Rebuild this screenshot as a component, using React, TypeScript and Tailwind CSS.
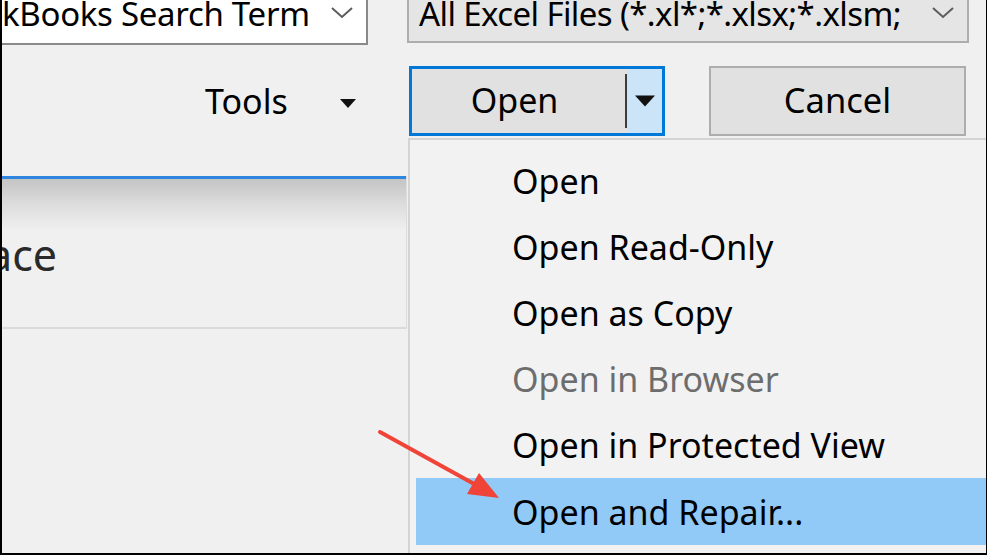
import React from 'react';

const font = "font-['Noto_Sans',sans-serif]";

const menuItems = [
  { label: 'Open' },
  { label: 'Open Read-Only' },
  { label: 'Open as Copy' },
  { label: 'Open in Browser', disabled: true },
  { label: 'Open in Protected View' },
  { label: 'Open and Repair...', active: true },
];

function Chevron() {
  return (
    <svg width="24" height="14" viewBox="0 0 24 14" className="shrink-0">
      <path d="M2 2 L12 11 L22 2" fill="none" stroke="#5c5c5c" strokeWidth="2" />
    </svg>
  );
}

function Caret({ w = 18, h = 10 }: { w?: number; h?: number }) {
  return (
    <svg width={w} height={h} viewBox="0 0 18 10">
      <path d="M0 0 H18 L9 10 Z" fill="#111" />
    </svg>
  );
}

export default function App() {
  return (
    <div
      className={`relative w-[987px] h-[555px] overflow-hidden bg-[#f0f0f0] border-l-2 border-b-2 border-r border-black ${font} text-black`}
    >
      {/* top row: search box + file type filter */}
      <div className="flex items-start">
        <div className="w-[366px] h-[45px] bg-white border-r-2 border-b-2 border-[#8a8a8a] flex items-center overflow-hidden pr-[12px]">
          <span className="ml-0 text-[33px] leading-none whitespace-nowrap tracking-[-0.3px] mt-[-16px]">
            kBooks Search Term
          </span>
          <div className="ml-auto mt-[-18px]">
            <Chevron />
          </div>
        </div>
        <div className="ml-[39px] w-[562px] h-[43px] bg-[#e5e5e5] border-l-2 border-r-2 border-b-2 border-[#adadad] flex items-center overflow-hidden pl-[10px] pr-[12px]">
          <span className="text-[33px] leading-none whitespace-nowrap tracking-[-0.6px] mt-[-14px]">
            All Excel Files (*.xl*;*.xlsx;*.xlsm;
          </span>
          <div className="ml-auto mt-[-16px]">
            <Chevron />
          </div>
        </div>
      </div>

      {/* second row: tools + buttons */}
      <div className="flex items-center mt-[21px] h-[70px]">
        <div className="w-[407px] flex items-center">
          <span className="ml-[203px] text-[34px] leading-none">Tools</span>
          <div className="ml-[52px] mt-[4px]">
            <Caret w={16} h={9} />
          </div>
        </div>
        <div className="w-[256px] h-[70px] border-[3px] border-[#0078d7] flex">
          <div className="flex-1 bg-[#e1e1e1] flex items-center justify-center">
            <span className="text-[34px] leading-none mb-[2px] mr-[8px]">Open</span>
          </div>
          <div className="w-[2px] bg-[#e1e1e1] flex items-center">
            <div className="w-[2px] h-[54px] bg-[#3c3c3c]" />
          </div>
          <div className="w-[35px] bg-[#cce4f7] flex items-center justify-center">
            <Caret w={20} h={12} />
          </div>
        </div>
        <div className="ml-[44px] w-[257px] h-[70px] border-2 border-[#adadad] bg-[#e1e1e1] flex items-center justify-center">
          <span className="text-[34.5px] leading-none mb-[2px]">Cancel</span>
        </div>
      </div>

      {/* left panel, behind the menu */}
      <div className="mt-[40px] w-[405px] border-r border-[#dcdcdc]">
        <div className="h-[3px] bg-[#2f86de]" />
        <div className="h-[52px] bg-gradient-to-b from-[#c4c4c4] via-[#dddddd] to-[#f0f0f0]" />
        <div className="h-[98px] border-b-2 border-[#dadada] flex items-start overflow-hidden">
          <span className="ml-[-64px] mt-[2px] text-[43px] leading-none text-[#2a2a2a]">
            Space
          </span>
        </div>
      </div>

      {/* dropdown menu */}
      <div className="absolute left-[406px] top-[138px] right-0 bottom-0 bg-[#f2f2f2] border-l-2 border-t-2 border-[#d4d4d4] pl-[6px] pt-[8px]">
        <div className="flex flex-col">
          {menuItems.map((item) => (
            <div
              key={item.label}
              className={`flex items-center pl-[96px] ${item.active ? 'h-[67px] bg-[#91c9f7]' : 'h-[66px]'}`}
            >
              <span
                className={`text-[34px] leading-none whitespace-nowrap ${
                  item.disabled ? 'text-[#6d6d6d]' : 'text-black'
                }`}
              >
                {item.label}
              </span>
            </div>
          ))}
        </div>
      </div>

      {/* red annotation arrow */}
      <svg className="absolute left-0 top-0 pointer-events-none" width="987" height="555">
        <line x1="378" y1="432" x2="474" y2="485" stroke="#ef4437" strokeWidth="4" strokeLinecap="round" />
        <path d="M497 498 L465 494 L477 473 Z" fill="#ef4437" />
      </svg>
    </div>
  );
}
